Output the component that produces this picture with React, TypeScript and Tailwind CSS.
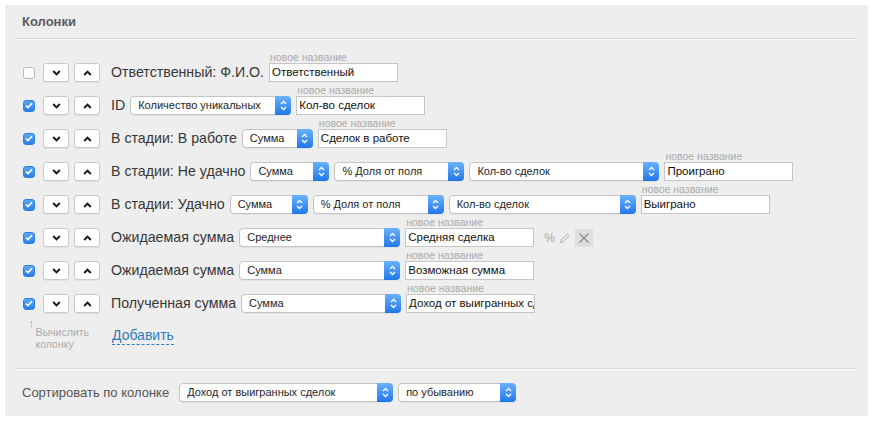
import React from 'react';

const font = { fontFamily: '"Liberation Sans", Arial, sans-serif' };

const Chevron: React.FC<{ up?: boolean }> = ({ up }) => (
  <svg width="9" height="6" viewBox="0 0 9 6" className="block">
    <path
      d={up ? 'M1.2 5 L4.5 1.6 L7.8 5' : 'M1.2 1 L4.5 4.4 L7.8 1'}
      fill="none"
      stroke="#1a1a1a"
      strokeWidth="2"
    />
  </svg>
);

const Checkbox: React.FC<{ checked?: boolean }> = ({ checked }) =>
  checked ? (
    <div className="w-[12px] h-[12px] rounded-[3px] bg-gradient-to-b from-[#5ba6f6] to-[#2a80e8] border border-[#2b7fe0] flex items-center justify-center shrink-0">
      <svg width="8" height="7" viewBox="0 0 8 7">
        <path d="M1 3.6 L3 5.6 L7 1.2" fill="none" stroke="#fff" strokeWidth="1.6" />
      </svg>
    </div>
  ) : (
    <div className="w-[12px] h-[12px] rounded-[3px] bg-white border border-[#b9b9b9] shrink-0" />
  );

const MoveButton: React.FC<{ up?: boolean }> = ({ up }) => (
  <div className="w-[26px] h-[19px] bg-white border border-[#c9c9c9] rounded-[3px] flex items-center justify-center shadow-[0_1px_0_rgba(0,0,0,0.06)] shrink-0">
    <Chevron up={up} />
  </div>
);

const Select: React.FC<{ value: string; width: number }> = ({ value, width }) => (
  <div
    className="h-[19px] bg-white border border-[#c4c4c4] rounded-[4px] flex items-stretch shrink-0 shadow-[0_1px_0_rgba(0,0,0,0.05)]"
    style={{ width }}
  >
    <div className="flex-1 pl-[7px] text-[11px] text-[#1e1e1e] leading-[17px] overflow-hidden whitespace-nowrap">
      {value}
    </div>
    <div className="w-[16px] -my-px -mr-px rounded-r-[4px] bg-gradient-to-b from-[#69b1fb] to-[#1f77ea] flex items-center justify-center">
      <svg width="7" height="11" viewBox="0 0 7 11">
        <path d="M1 4 L3.5 1.5 L6 4 M1 7 L3.5 9.5 L6 7" fill="none" stroke="#fff" strokeWidth="1.3" />
      </svg>
    </div>
  </div>
);

const NameInput: React.FC<{ value: string }> = ({ value }) => (
  <div className="flex flex-col -mt-[11px] shrink-0">
    <div className="h-[11px] pl-[1px] text-[10.5px] leading-[11px] text-[#ababab]">новое название</div>
    <div className="w-[129px] h-[19px] bg-white border border-[#c6c6c6] pl-[2px] text-[11.5px] leading-[17px] text-[#111] overflow-hidden whitespace-nowrap">
      {value}
    </div>
  </div>
);

interface Row {
  checked: boolean;
  label: string;
  selects: { value: string; width: number }[];
  name: string;
  tools?: boolean;
}

const rows: Row[] = [
  { checked: false, label: 'Ответственный: Ф.И.О.', selects: [], name: 'Ответственный' },
  { checked: true, label: 'ID', selects: [{ value: 'Количество уникальных', width: 161 }], name: 'Кол-во сделок' },
  { checked: true, label: 'В стадии: В работе', selects: [{ value: 'Сумма', width: 71 }], name: 'Сделок в работе' },
  {
    checked: true,
    label: 'В стадии: Не удачно',
    selects: [
      { value: 'Сумма', width: 79 },
      { value: '% Доля от поля', width: 130 },
      { value: 'Кол-во сделок', width: 190 },
    ],
    name: 'Проиграно',
  },
  {
    checked: true,
    label: 'В стадии: Удачно',
    selects: [
      { value: 'Сумма', width: 78 },
      { value: '% Доля от поля', width: 131 },
      { value: 'Кол-во сделок', width: 187 },
    ],
    name: 'Выиграно',
  },
  { checked: true, label: 'Ожидаемая сумма', selects: [{ value: 'Среднее', width: 161 }], name: 'Средняя сделка', tools: true },
  { checked: true, label: 'Ожидаемая сумма', selects: [{ value: 'Сумма', width: 161 }], name: 'Возможная сумма' },
  { checked: true, label: 'Полученная сумма', selects: [{ value: 'Сумма', width: 160 }], name: 'Доход от выигранных сделок' },
];

export default function App() {
  return (
    <div className="w-[875px] h-[421px] bg-white p-[5px]" style={font}>
      <div className="w-[863px] h-[411px] bg-[#eeeeee] px-[10px] pt-[9px]">
        {/* Header */}
        <div className="pb-[8px] border-b border-[#d7d7d7] shadow-[0_1px_0_#f8f8f8]">
          <h3 className="pl-[7px] text-[13px] leading-[16px] font-bold text-[#5b5b5b]">Колонки</h3>
        </div>

        {/* Rows */}
        <div className="pt-[17px] pl-[8px]">
          {rows.map((row, i) => (
            <div key={i} className="h-[33px] flex items-center">
              <Checkbox checked={row.checked} />
              <div className="ml-[8px] flex gap-[5px]">
                <MoveButton />
                <MoveButton up />
              </div>
              <span className="ml-[11px] text-[14.2px] text-[#383838] whitespace-nowrap">{row.label}</span>
              <div className="ml-[5px] flex items-center gap-[5px]">
                {row.selects.map((s, j) => (
                  <Select key={j} value={s.value} width={s.width} />
                ))}
                <NameInput value={row.name} />
                {row.tools && (
                  <div className="ml-[5px] flex items-center gap-[4px] text-[#a9a9a9]">
                    <span className="text-[12px] leading-none">%</span>
                    <svg width="12" height="12" viewBox="0 0 12 12">
                      <path d="M1.5 10.5 L2 8.2 L8.4 1.8 L10.2 3.6 L3.8 10 Z" fill="none" stroke="#b0b0b0" strokeWidth="1" />
                    </svg>
                    <div className="w-[18px] h-[18px] bg-[#dedede] flex items-center justify-center">
                      <svg width="12" height="12" viewBox="0 0 12 12">
                        <path d="M1.5 1.5 L10.5 10.5 M10.5 1.5 L1.5 10.5" stroke="#8a8a8a" strokeWidth="1.2" />
                      </svg>
                    </div>
                  </div>
                )}
              </div>
            </div>
          ))}

          {/* Add / compute */}
          <div className="flex items-start h-[48px]">
            <div className="w-[89px] pl-[5px] flex items-start">
              <span className="text-[13px] leading-[13px] text-[#a8a8a8] mt-[-3px]">↑</span>
              <div className="ml-[1px] mt-[6px] text-[10.5px] leading-[12px] text-[#acacac]">
                Вычислить
                <br />
                колонку
              </div>
            </div>
            <span className="mt-[6px] text-[14px] leading-[18px] text-[#2f7bbd] border-b border-dashed border-[#2f7bbd]">
              Добавить
            </span>
          </div>
        </div>

        {/* Sort */}
        <div className="border-t border-[#d7d7d7] shadow-[inset_0_1px_0_#f8f8f8] h-[48px] flex items-center">
          <span className="pl-[7px] text-[13px] text-[#555]">Сортировать по колонке</span>
          <div className="ml-[10px] flex gap-[5px]">
            <Select value="Доход от выигранных сделок" width={214} />
            <Select value="по убыванию" width={118} />
          </div>
        </div>
      </div>
    </div>
  );
}
